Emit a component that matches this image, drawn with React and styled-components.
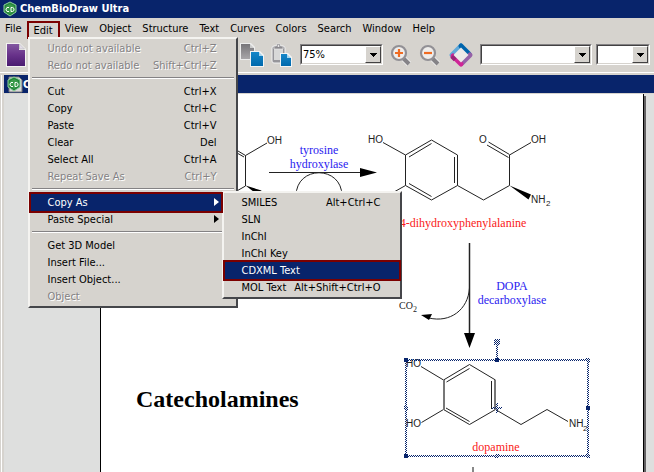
import React from "react";
import styled, { createGlobalStyle, css } from "styled-components";

const navy = "#08246b";
const face = "#d6d3ce";
const maroon = "#7b0000";

const GlobalStyle = createGlobalStyle`
  * { box-sizing: border-box; }
  body { margin: 0; background: ${face}; overflow: hidden; }
  button, select { font: inherit; color: inherit; }
`;

const Shell = styled.div`
  display: flex;
  flex-direction: column;
  height: 100vh;
  overflow: hidden;
  background: ${face};
  color: #000;
  font: 11px/17px "DejaVu Sans Condensed", "DejaVu Sans", sans-serif;
`;

const TitleBar = styled.header`
  display: flex;
  align-items: center;
  gap: 1px;
  height: 18px;
  flex: none;
  padding-left: 2px;
  background: ${navy};
  color: #fff;
`;

const Title = styled.h1`
  margin: 0;
  font: bold 11px/18px "DejaVu Sans Condensed", "DejaVu Sans", sans-serif;
`;

const MenuBar = styled.nav`
  display: flex;
  align-items: flex-start;
  height: 20px;
  flex: none;
  padding: 1px 0 0 0;
`;

const MenuSlot = styled.div`
  position: relative;
  z-index: 2;
`;

const MenuButton = styled.button`
  display: block;
  border: 0;
  height: 19px;
  padding: 0 6px 0 5px;
  background: none;
  line-height: 18px;
  white-space: nowrap;
  ${(p) =>
    p.$open &&
    css`
      margin: 2px 0 0 0;
      height: 18px;
      padding: 1px 5px 0 4px;
      line-height: 13px;
      border: 2px solid ${maroon};
    `}
`;

const Menu = styled.div`
  position: absolute;
  z-index: 3;
  width: ${(p) => p.$width};
  top: ${(p) => p.$top};
  left: ${(p) => p.$left};
  padding: 1px;
  background: ${face};
  border: 2px solid;
  border-color: #f4f3f0 #45464a #45464a #f4f3f0;
`;

const MenuRow = styled.button`
  display: flex;
  justify-content: space-between;
  position: relative;
  width: 100%;
  height: 17px;
  border: 0;
  padding: 0 19px 0 16px;
  background: none;
  line-height: 17px;
  text-align: left;
  white-space: nowrap;
  &:disabled {
    color: #848284;
    text-shadow: 1px 1px 0 #fff;
  }
  ${(p) =>
    p.$active &&
    css`
      background: ${navy};
      color: #fff;
      box-shadow: 0 0 0 2px ${maroon};
      z-index: 1;
    `}
`;

const SubSlot = styled.div`
  position: relative;
  z-index: 1;
  > ${MenuRow} {
    width: calc(100% - 14px);
    z-index: 4;
  }
  > ${MenuRow} > svg { right: 2px; }
`;

const Pointer = styled.svg`
  position: absolute;
  right: 16px;
  top: 4px;
`;

const Rule = styled.hr`
  height: 2px;
  margin: 3px 1px 4px;
  border: 0;
  border-top: 1px solid #848284;
  border-bottom: 1px solid #fff;
`;

const Toolbar = styled.div`
  display: flex;
  align-items: center;
  height: 35px;
  flex: none;
  padding: 0 4px 1px 5px;
  border-bottom: 1px solid #fff;
  svg { display: block; }
`;

const Tool = styled.button`
  flex: none;
  padding: 0;
  border: 0;
  background: none;
  margin-left: ${(p) => p.$before || "0"};
`;

const ComboBox = styled.label`
  position: relative;
  flex: ${(p) => (p.$grow ? "0 1 " : "0 0 ")} ${(p) => p.$width};
  height: 21px;
  margin-left: ${(p) => p.$before};
  border: 1px solid;
  border-color: #848284 #fff #fff #848284;
  select {
    display: block;
    appearance: none;
    width: 100%;
    height: 19px;
    margin: 0;
    padding: 0 18px 0 1px;
    border: 1px solid;
    border-color: #424142 ${face} ${face} #424142;
    border-radius: 0;
    background: #fff;
    outline: 0;
    line-height: 17px;
  }
`;

const DropArrow = styled.span`
  position: absolute;
  right: 1px;
  top: 1px;
  width: 16px;
  height: 17px;
  display: grid;
  place-items: center;
  pointer-events: none;
  background: ${face};
  border: 1px solid;
  border-color: #fff #424142 #424142 #fff;
`;

const Workspace = styled.main`
  display: flex;
  flex-direction: column;
  flex: 1;
  min-height: 0;
  margin: 2px 0 0 1px;
  border-left: 1px solid #fff;
  padding-left: 2px;
`;

const DocumentBar = styled.div`
  display: flex;
  align-items: center;
  height: 18px;
  flex: none;
  padding-left: 2px;
  background: ${navy};
  color: #fff;
  font-weight: bold;
`;

const Canvas = styled.div`
  display: flex;
  flex: 1;
  min-height: 0;
  overflow: hidden;
  padding: 0 10px 0 96px;
  background: #dedfde;
  border-top: 1px solid ${face};
`;

const Page = styled.section`
  flex: 1;
  min-width: 0;
  background: #fff;
  border-left: 1px solid #000;
  border-right: 1px solid #000;
  box-shadow: 2px 2px 0 #636163;
  svg { display: block; }
`;

const Logo = ({ page }) => (
  <svg width="17" height="17" viewBox="0 0 17 17" aria-hidden="true">
    {page && <path d="M3 1h10l3 3v12H3z" fill="#d8d8d8" stroke="#777" />}
    <path d="M8 1l6 3v7l-6 4-6-4V4z" fill="#23853b" stroke="#8ed09b" />
    <path d="M8 3l4 2v5l-4 3-4-3V5z" fill="#3b9b4a" />
    <path d="M7 6.500H5L4 8v1l1 1.500h2M9 6.500v4h1.500L12 9.500v-2l-1.500-1z" fill="none" stroke="#fff" />
  </svg>
);

const DropGlyph = () => (
  <svg width="7" height="4" viewBox="0 0 7 4" shapeRendering="crispEdges" aria-hidden="true">
    <path d="M0 0h7L3.500 4z" />
  </svg>
);

const Combo = ({ label, options, ...rest }) => (
  <ComboBox {...rest}>
    <select aria-label={label}>
      {options.map((o) => (
        <option key={o}>{o}</option>
      ))}
    </select>
    <DropArrow>
      <DropGlyph />
    </DropArrow>
  </ComboBox>
);

const NewIcon = () => (
  <svg width="22" height="26" viewBox="0 0 22 26">
    <defs>
      <linearGradient id="violet" x2="0" y2="1">
        <stop offset="0" stopColor="#8358a0" />
        <stop offset="0.500" stopColor="#68328a" />
        <stop offset="1" stopColor="#4a1b70" />
      </linearGradient>
    </defs>
    <path d="M1 1h14l6 6v18H1z" fill="#fff" opacity="0.700" />
    <path d="M2 2h12v6h6v16H2z" fill="url(#violet)" />
    <path d="M14.500 2l5 5h-5z" fill="#e2dce8" stroke="#aaa" strokeWidth="0.500" />
  </svg>
);

const CutIcon = () => (
  <svg width="22" height="26" viewBox="0 0 22 26">
    <path d="M18 2L6 18M4 4l12 14" stroke="#777" strokeWidth="2" />
    <circle cx="17.500" cy="20" r="3" fill="#fff" stroke="#ee6822" strokeWidth="2" />
    <circle cx="5" cy="20" r="3" fill="#fff" stroke="#ee6822" strokeWidth="2" />
  </svg>
);

const BluePage = ({ x, y, w, h }) => (
  <g transform={`translate(${x} ${y})`}>
    <path d={`M-1-1h${w - 2}l4 4v${h - 2}H-1z`} fill="#f4f4f4" />
    <path d={`M0 0h${w - 4}v4h4v${h - 4}H0z`} fill="url(#blue)" />
    <path d={`M${w - 4} 0v4h4z`} fill="#a6d4ee" />
  </g>
);

const CopyIcon = () => (
  <svg width="26" height="26" viewBox="0 0 26 26">
    <defs>
      <linearGradient id="blue" x2="0" y2="1">
        <stop offset="0" stopColor="#1687c8" />
        <stop offset="1" stopColor="#0069ad" />
      </linearGradient>
      <linearGradient id="grey" x2="0" y2="1">
        <stop offset="0" stopColor="#777579" />
        <stop offset="1" stopColor="#a8a6a9" />
      </linearGradient>
    </defs>
    <path d="M1 1h11l4 4v13H1z" fill="#ededed" />
    <path d="M2 2h9v4h4v11H2z" fill="url(#grey)" />
    <path d="M11 2v4h4z" fill="#ccc" />
    <BluePage x={12} y={10} w={12} h={14} />
  </svg>
);

const PasteIcon = () => (
  <svg width="22" height="26" viewBox="0 0 22 26">
    <rect x="2" y="4" width="13" height="17" rx="2" fill="#96959a" stroke="#f0f0f0" />
    <rect x="4" y="7" width="9" height="11" fill="#d8d8d8" />
    <path d="M4 7V4h2.500V2h4v2H13v3z" fill="#8b898e" stroke="#e8e8e8" strokeWidth="0.700" />
    <circle cx="8.500" cy="4" r="1" fill="#eee" />
    <BluePage x={11} y={12} w={10} h={12} />
  </svg>
);

const ZoomIcon = ({ plus }) => (
  <svg width="22" height="24" viewBox="0 0 22 24">
    <path d="M12 14l7 7" stroke="#eee" strokeWidth="6" />
    <path d="M13 15l6 6" stroke="#858387" strokeWidth="4" />
    <circle cx="9" cy="10" r="7" fill="#efedeb" stroke="#929095" strokeWidth="2.200" />
    <path d={plus ? "M5 10h8M9 6v8" : "M5 10h8"} stroke="#ef6b22" strokeWidth="2.200" />
  </svg>
);

const DiamondIcon = () => (
  <svg width="26" height="26" viewBox="0 0 26 26" fill="none" strokeWidth="5" strokeLinejoin="round">
    <path d="M13 3.500L22.500 13 13 22.500 3.500 13z" fill="#e8e6e4" stroke="none" />
    <path d="M4 13l9-9" stroke="#62a9d9" strokeLinecap="round" />
    <path d="M13 4l8 8" stroke="#0064ac" strokeLinecap="round" />
    <path d="M22 13l-8 8" stroke="#9561a8" strokeLinecap="round" />
    <path d="M13 22l-8-8" stroke="#cf2597" strokeLinecap="round" />
    <path d="M4 14l3.500 3.500" stroke="#9b2479" />
    <path d="M13 5.500L20.500 13 13 20.500 5.500 13z" fill="#eceae8" />
  </svg>
);

const Serif = styled.text`
  font: 12px "Liberation Serif", serif;
  text-anchor: middle;
  fill: ${(p) => p.$ink};
`;

const Heading = styled.text`
  font: bold 24px "Liberation Serif", serif;
`;

const Atom = styled.text`
  font: ${(p) => (p.$small ? "8px" : "10px")} ${(p) => (p.$serif ? '"Liberation Serif", serif' : '"Liberation Sans", sans-serif')};
  fill: #222;
`;

const Handle = ({ x, y }) => <rect x={x - 2} y={y - 2} width="4" height="4" fill="url(#dots)" />;

const blue = "#2a22f0";
const red = "#fa1a20";

const Drawing = () => (
  <svg width="542" height="378" viewBox="101 94 542 378" role="img" aria-label="Catecholamine pathway">
    <defs>
      <pattern id="dots" width="2" height="2" patternUnits="userSpaceOnUse">
        <path d="M0 0h1v1H0zM1 1h1v1H1z" fill={navy} shapeRendering="crispEdges" />
      </pattern>
    </defs>

    <g fill="none" stroke="#222">
      <path d="M218 139l27.500 16.500L267 143M218 142l26 15M245.500 155.500V186L235 192" />
      <path d="M269 172.500H362M296 196C296 165 342 165 342 196" />
      <path d="M383 142.500L405.500 155M405.500 155l26-15 26 15v30.500l-26 14.500-26-14.500zM394 192l11.500-6.500M409 157l22.500-13.500M454.500 157v26M409 183.500l22.500 13" />
      <path d="M457.500 185.500l26 14.500 26-14.500V155L531 142.500M509.500 154.500L488.500 142M508.500 157.500L487 145" />
      <path d="M469.500 243v95" strokeWidth="1.500" />
      <path d="M469.500 288C468 310 450 323 429 318" />
      <path d="M421 366.500L443.500 380 469.500 364.500 495.500 380M495.500 409.500L469.500 424.500 443.500 409.500 421.500 422.500M446.500 382l23-13.500M491.500 381v28M446 408l23.500 13.500" />
      <path d="M495.500 409.500l25.500 15 26-15 21 12" />
      <path d="M444 380v30M495 380v30" stroke="#777" strokeWidth="2" />
      <path d="M473 467v5" stroke="#888" strokeWidth="2" />
    </g>
    <path d="M360 168l17 4.500-17 4.500zM464 333h11l-5.500 15zM421 315l11-1-3 6zM245.500 185.500l16 5-3 5zM509.500 185.500l21.500 9-2.500 5z" />

    <Atom x="267" y="144">OH</Atom>
    <Atom x="368" y="143">HO</Atom>
    <Atom x="479" y="143">O</Atom>
    <Atom x="531" y="143">OH</Atom>
    <Atom x="531" y="203">NH</Atom>
    <Atom x="546" y="206" $small>2</Atom>
    <Atom x="399" y="309" $serif>CO</Atom>
    <Atom x="413" y="312" $serif $small>2</Atom>
    <Atom x="406" y="367">HO</Atom>
    <Atom x="406" y="427">HO</Atom>
    <Atom x="569" y="427">NH</Atom>
    <Atom x="583" y="431" $small>2</Atom>

    <Serif x="319" y="154" $ink={blue}>tyrosine</Serif>
    <Serif x="319" y="168" $ink={blue}>hydroxylase</Serif>
    <Serif x="463" y="227" $ink={red}>4-dihydroxyphenylalanine</Serif>
    <Serif x="512" y="290" $ink={blue}>DOPA</Serif>
    <Serif x="512" y="304" $ink={blue}>decarboxylase</Serif>
    <Serif x="496" y="451" $ink={red}>dopamine</Serif>
    <Heading x="136" y="407">Catecholamines</Heading>

    <g shapeRendering="crispEdges">
      <path d="M405 359h184v98H405zM407 361v94h180v-94z" fill="url(#dots)" fillRule="evenodd" />
      <path d="M494 339h6v6h-6zM496 345h2v14h-2zM492 407h10v2h-10zM496 403h2v10h-2z" fill="url(#dots)" />
      <Handle x={588} y={360} />
      <Handle x={406} y={408} />
      <Handle x={497} y={456} />
      <Handle x={588} y={456} />
      <path d="M404 358h4v4h-4zM495 358h4v4h-4zM586 406h4v4h-4zM404 454h4v4h-4z" fill={navy} />
    </g>
  </svg>
);

const Row = ({ text, keys, arrow, ...rest }) => (
  <MenuRow type="button" role="menuitem" {...rest}>
    <span>{text}</span>
    {keys && <span>{keys}</span>}
    {arrow && (
      <Pointer width="5" height="8" viewBox="0 0 5 8" fill="currentColor" aria-hidden="true">
        <path d="M0 0l5 4-5 4z" />
      </Pointer>
    )}
  </MenuRow>
);

const EditMenu = () => (
  <Menu $top="18px" $left="1px" $width="210px" role="menu">
    <Row text="Undo not available" keys="Ctrl+Z" disabled />
    <Row text="Redo not available" keys="Shift+Ctrl+Z" disabled />
    <Rule />
    <Row text="Cut" keys="Ctrl+X" />
    <Row text="Copy" keys="Ctrl+C" />
    <Row text="Paste" keys="Ctrl+V" />
    <Row text="Clear" keys="Del" />
    <Row text="Select All" keys="Ctrl+A" />
    <Row text="Repeat Save As" keys="Ctrl+Y" disabled />
    <Rule />
    <SubSlot>
      <Row text="Copy As" arrow $active />
      <Menu $top="-3px" $left="191px" $width="180px" role="menu">
        <Row text="SMILES" keys="Alt+Ctrl+C" />
        <Row text="SLN" />
        <Row text="InChI" />
        <Row text="InChI Key" />
        <Row text="CDXML Text" $active />
        <Row text="MOL Text" keys="Alt+Shift+Ctrl+O" />
      </Menu>
    </SubSlot>
    <Row text="Paste Special" arrow />
    <Rule />
    <Row text="Get 3D Model" />
    <Row text="Insert File..." />
    <Row text="Insert Object..." />
    <Row text="Object" disabled />
  </Menu>
);

const menus = ["File", "Edit", "View", "Object", "Structure", "Text", "Curves", "Colors", "Search", "Window", "Help"];

export default function App() {
  return (
    <Shell>
      <GlobalStyle />
      <TitleBar>
        <Logo />
        <Title>ChemBioDraw Ultra</Title>
      </TitleBar>
      <MenuBar>
        {menus.map((name) => (
          <MenuSlot key={name}>
            <MenuButton type="button" $open={name === "Edit"}>
              {name}
            </MenuButton>
            {name === "Edit" && <EditMenu />}
          </MenuSlot>
        ))}
      </MenuBar>
      <Toolbar>
        <Tool aria-label="New"><NewIcon /></Tool>
        <Tool aria-label="Cut" $before="185px"><CutIcon /></Tool>
        <Tool aria-label="Copy" $before="5px"><CopyIcon /></Tool>
        <Tool aria-label="Paste" $before="5px"><PasteIcon /></Tool>
        <Combo label="Zoom" options={["75%", "100%"]} $width="83px" $before="8px" />
        <Tool aria-label="Zoom in" $before="7px"><ZoomIcon plus /></Tool>
        <Tool aria-label="Zoom out" $before="7px"><ZoomIcon /></Tool>
        <Tool aria-label="Draw" $before="7px"><DiamondIcon /></Tool>
        <Combo label="Font" options={[""]} $width="112px" $before="6px" $grow />
        <Combo label="Size" options={[""]} $width="54px" $before="4px" />
      </Toolbar>
      <Workspace>
        <DocumentBar>
          <Logo page />
          <span>C</span>
        </DocumentBar>
        <Canvas>
          <Page>
            <Drawing />
          </Page>
        </Canvas>
      </Workspace>
    </Shell>
  );
}
